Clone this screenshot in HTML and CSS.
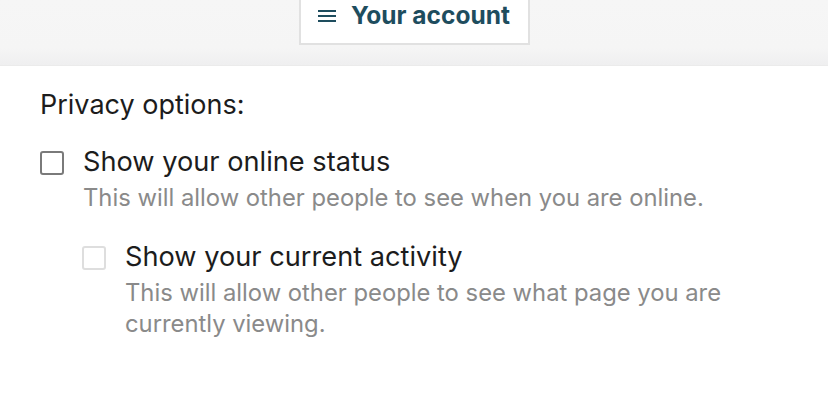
FILE: index.html
```html
<!DOCTYPE html>
<html>
<head>
<meta charset="utf-8">
<link rel="stylesheet" href="styles.css">
</head>
<body>
<header class="topbar">
  <div class="account-tab">
    <svg class="menu-icon" width="18" height="12" viewBox="0 0 18 12"><rect x="0" y="0" width="18" height="2" fill="currentColor"/><rect x="0" y="5" width="18" height="2" fill="currentColor"/><rect x="0" y="10" width="18" height="2" fill="currentColor"/></svg>
    <span class="account-title">Your account</span>
  </div>
</header>
<main class="content">
  <p class="section-label">Privacy options:</p>
  <div class="option">
    <span class="checkbox"></span>
    <div class="option-text">
      <div class="option-label">Show your online status</div>
      <div class="option-desc">This will allow other people to see when you are online.</div>
    </div>
  </div>
  <div class="option nested">
    <span class="checkbox disabled"></span>
    <div class="option-text">
      <div class="option-label">Show your current activity</div>
      <div class="option-desc">This will allow other people to see what page you are currently viewing.</div>
    </div>
  </div>
</main>
</body>
</html>
```
FILE: styles.css
```css
html, body {
  margin: 0;
  padding: 0;
  background: #fff;
  font-family: Inter, "Noto Sans", sans-serif;
}
.topbar {
  height: 66px;
  background: linear-gradient(#f6f6f6 0, #f5f5f5 48px, #efeff0 65px);
  display: flex;
  justify-content: center;
  align-items: flex-start;
  border-bottom: 1px solid #ebebeb;
  box-sizing: border-box;
}
.account-tab {
  margin-top: -2px;
  height: 47px;
  width: 231px;
  box-sizing: border-box;
  background: #fff;
  border: 2px solid #e1e1e1;
  display: flex;
  align-items: flex-start;
  justify-content: center;
  gap: 15px;
  color: #1e4d5e;
}
.menu-icon {
  display: block;
  margin-top: 10px;
}
.account-title {
  font-weight: 700;
  font-size: 24.5px;
  line-height: 30px;
}
.content {
  padding: 21px 40px 0 40px;
}
.section-label {
  margin: 0 0 21px 0;
  font-size: 27px;
  color: #1c1c1c;
  line-height: 36px;
}
.option {
  display: flex;
  gap: 19px;
  margin-bottom: 26px;
}
.option.nested { margin-left: 42px; }
.checkbox {
  flex: none;
  width: 24px;
  height: 24px;
  box-sizing: border-box;
  border: 2px solid #7a7a7a;
  border-radius: 3px;
  margin-top: 7px;
}
.checkbox.disabled { border-color: #dedede; }
.option-label {
  font-size: 27.2px;
  line-height: 36px;
  color: #1c1c1c;
}
.option-desc {
  margin-top: 2px;
  font-size: 23.8px;
  line-height: 31px;
  color: #8a8a8a;
}
```
